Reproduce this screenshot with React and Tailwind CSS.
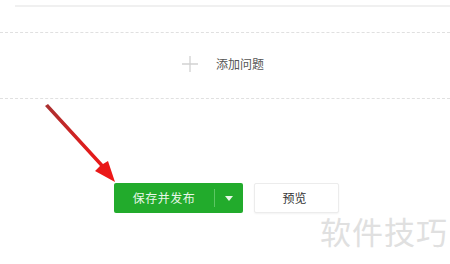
const CJK = "font-['Microsoft_YaHei','Noto_Sans_CJK_SC',sans-serif]";

export default function App() {
  return (
    <div className={`relative w-[450px] h-[264px] overflow-hidden bg-white ${CJK}`}>
      {/* top rule */}
      <div className="pt-[5px] pl-[15px]">
        <div className="h-[2px] bg-[#f0f0f0]" />
      </div>

      {/* add question block */}
      <div className="mt-[25px] border-y border-dashed border-[#e0e0e0] h-[67px] flex items-center justify-center pr-[5px]">
        <div className="flex items-center gap-[17px] -mt-[3px]">
          <svg width="18" height="18" viewBox="0 0 18 18" className="text-[#d2d2d2]">
            <path d="M9 1v16M1 9h16" stroke="currentColor" strokeWidth="1.3" />
          </svg>
          <span className="text-[12px] text-[#555]">添加问题</span>
        </div>
      </div>

      {/* actions */}
      <div className="mt-[84px] pl-[114px] flex gap-[11px]">
        <div className="flex h-[30px] w-[129px] rounded-[2px] bg-[#22ab2c] text-white">
          <button className="flex-1 text-[12px] tracking-[0.5px] text-[#e8f7e8]">保存并发布</button>
          <div className="my-[6px] w-px bg-[#5cc763]" />
          <button className="w-[28px] flex items-center justify-center">
            <svg width="8" height="5" viewBox="0 0 8 5"><path d="M0 0h8L4 5z" fill="#e8f7e8" /></svg>
          </button>
        </div>
        <button className="h-[30px] w-[85px] border border-[#ececec] rounded-[2px] bg-white text-[12px] text-[#333] shadow-[0_1px_2px_rgba(0,0,0,0.05)] pr-[4px]">
          预览
        </button>
      </div>

      {/* red arrow overlay */}
      <svg className="absolute left-0 top-0" width="450" height="264" viewBox="0 0 450 264">
        <defs>
          <linearGradient id="ag" x1="0" y1="0" x2="1" y2="1">
            <stop offset="0" stopColor="#a83232" />
            <stop offset="0.6" stopColor="#e01c1c" />
            <stop offset="1" stopColor="#f01616" />
          </linearGradient>
        </defs>
        <path d="M45 106 L100 166 L95 171 L115 182 L108 161 L103 164 L48 104 Z" fill="url(#ag)" />
      </svg>

      {/* watermark */}
      <div className="absolute left-[320px] top-[215px] text-[31px] leading-none text-[#e0e0e0] tracking-[1px]">
        软件技巧
      </div>
    </div>
  );
}
